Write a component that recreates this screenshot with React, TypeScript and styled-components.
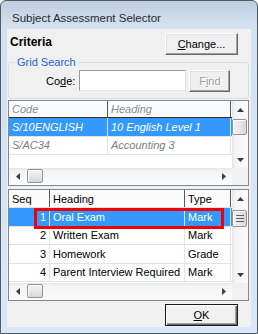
import styled, { createGlobalStyle, css } from "styled-components";

const GlobalStyle = createGlobalStyle`
  * { box-sizing: border-box; }
  html, body { margin: 0; padding: 0; background: #ffffff; }
  body {
    font-family: "Liberation Sans", Arial, sans-serif;
    font-size: 11px;
    color: #000;
  }
`;

const Window = styled.div`
  width: 258px;
  height: 334px;
  display: flex;
  flex-direction: column;
  padding: 0 6px 6px;
  border: 1px solid #525c66;
  border-radius: 6px 6px 0 0;
  background: linear-gradient(#bfcedf, #d3e1f0 26px, #d9e7f6);
`;

const TitleBar = styled.div`
  flex: none;
  height: 28px;
  padding: 10px 0 0 5px;
  font-size: 11.5px;
  line-height: 14px;
  color: #2a2a2a;
`;

const Client = styled.div`
  flex: 1;
  display: flex;
  flex-direction: column;
  padding: 4px 2px 0 1px;
  background: #f0f0f0;
`;

const TopRow = styled.div`
  flex: none;
  height: 22px;
  display: flex;
  justify-content: space-between;
`;

const SectionTitle = styled.div`
  padding: 2px 0 0 2px;
  font-size: 12px;
  font-weight: bold;
  line-height: 14px;
`;

const Button = styled.button<{ $width?: number; $primary?: boolean; $inactive?: boolean }>`
  flex: none;
  width: ${(p) => p.$width ?? 73}px;
  height: 22px;
  padding: 0;
  font: inherit;
  font-size: 11px;
  line-height: 1;
  color: #000;
  background: #f0f0f0;
  border: 1px solid;
  border-color: #ffffff #696969 #696969 #ffffff;
  box-shadow: inset -1px -1px #a0a0a0, inset 1px 1px #e3e3e3;

  ${(p) =>
    p.$primary &&
    css`
      border-color: #1a1a1a;
      box-shadow: inset 1px 1px #ffffff, inset -1px -1px #696969, inset -2px -2px #a0a0a0;
    `}

  ${(p) =>
    p.$inactive &&
    css`
      color: #a0a0a0;
      text-shadow: 1px 1px #ffffff;
    `}

  u { text-underline-offset: 1px; }
`;

const TopButton = styled(Button)`
  margin-right: 11px;
`;

const GroupBox = styled.fieldset`
  flex: none;
  width: 241px;
  height: 44px;
  margin: 0;
  padding: 0;
  min-inline-size: 0;
  border: 1px solid #d5dfe5;
  border-radius: 3px;
`;

const Legend = styled.legend`
  margin-left: 6px;
  padding: 0 2px;
  font-size: 11px;
  line-height: 14px;
  color: #1f5fd1;
`;

const FieldRow = styled.div`
  display: flex;
  align-items: flex-start;
  padding: 1px 0 0 37px;
`;

const FieldLabel = styled.label`
  height: 21px;
  display: flex;
  align-items: center;
  margin-right: 4px;
`;

const TextBox = styled.input`
  width: 107px;
  height: 21px;
  margin: 0 3px 0 0;
  padding: 0 2px;
  font: inherit;
  background: #ffffff;
  border: 1px solid;
  border-color: #9a9a9a #e3e3e3 #e3e3e3 #9a9a9a;
  outline: none;
`;

const GridFrame = styled.div<{ $height: number; $gap: number }>`
  position: relative;
  flex: none;
  width: 241px;
  height: ${(p) => p.$height}px;
  margin-top: ${(p) => p.$gap}px;
  display: grid;
  grid-template-columns: 1fr 16px;
  grid-template-rows: 1fr 17px;
  border: 1px solid #828790;
  background: #ffffff;
`;

const GridBody = styled.div`
  grid-column: 1;
  grid-row: 1;
  overflow: hidden;
`;

const HeaderRow = styled.div<{ $cols: string; $height: number; $line: string }>`
  display: grid;
  grid-template-columns: ${(p) => p.$cols};
  height: ${(p) => p.$height}px;
  border-bottom: 1px solid ${(p) => p.$line};
  background: #fbfbfb;
`;

const HeaderCell = styled.div<{ $dim?: boolean }>`
  display: flex;
  align-items: center;
  padding: 0 3px;
  border-right: 1px solid #5a5a5a;
  white-space: nowrap;
  overflow: hidden;
  color: ${(p) => (p.$dim ? "#8c8c8c" : "#000")};
  font-style: ${(p) => (p.$dim ? "italic" : "normal")};
`;

const Row = styled.div<{ $cols: string; $selected?: boolean; $dim?: boolean }>`
  display: grid;
  grid-template-columns: ${(p) => p.$cols};
  height: 18.5px;
  border-bottom: 1px solid #e2e2e2;
  background: ${(p) => (p.$selected ? "#3399ff" : "#ffffff")};
  color: ${(p) => (p.$selected ? "#ffffff" : p.$dim ? "#7d7d7d" : "#000")};
  font-style: ${(p) => (p.$dim ? "italic" : "normal")};
`;

const Cell = styled.div<{ $right?: boolean }>`
  display: flex;
  align-items: center;
  justify-content: ${(p) => (p.$right ? "flex-end" : "flex-start")};
  padding: 0 3px;
  border-right: 1px solid #e2e2e2;
  white-space: nowrap;
  overflow: hidden;
`;

const VScroll = styled.div`
  grid-column: 2;
  grid-row: 1;
  display: flex;
  flex-direction: column;
  background: linear-gradient(to right, #e6e6e6, #f4f4f4 3px, #fbfbfb);
`;

const HScroll = styled.div`
  grid-column: 1;
  grid-row: 2;
  display: flex;
  background: linear-gradient(#e6e6e6, #f4f4f4 3px, #fbfbfb);
`;

const ScrollCorner = styled.div`
  grid-column: 2;
  grid-row: 2;
  background: #f0f0f0;
`;

const ArrowCell = styled.div<{ $horizontal?: boolean }>`
  flex: none;
  width: ${(p) => (p.$horizontal ? 17 : 16)}px;
  height: ${(p) => (p.$horizontal ? 17 : 17)}px;
  display: flex;
  align-items: center;
  justify-content: center;
`;

const Spacer = styled.div`
  flex: 1;
`;

const Thumb = styled.div<{ $horizontal?: boolean; $offset: number; $size: number }>`
  flex: none;
  display: flex;
  align-items: center;
  justify-content: center;
  border: 1px solid #959595;
  border-radius: 2px;
  box-shadow: inset 1px 1px #ffffff;
  ${(p) =>
    p.$horizontal
      ? css`
          width: ${p.$size}px;
          height: 14px;
          margin: 1px 0 0 ${p.$offset}px;
          background: linear-gradient(#f3f3f3, #e8e8e8 50%, #d6d6d6);
        `
      : css`
          width: 15px;
          height: ${p.$size}px;
          margin: ${p.$offset}px 0 0 0;
          background: linear-gradient(to right, #f3f3f3, #e8e8e8 50%, #d6d6d6);
        `}
`;

const Highlight = styled.div`
  position: absolute;
  left: 25px;
  top: 18px;
  width: 190px;
  height: 21px;
  border: 3px solid #f00000;
  pointer-events: none;
`;

const BottomRow = styled.div`
  flex: none;
  display: flex;
  justify-content: flex-end;
  margin-top: 3px;
`;

type Dir = "up" | "down" | "left" | "right";

const arrowPoints: Record<Dir, string> = {
  up: "3.5,0 7,4 0,4",
  down: "0,0 7,0 3.5,4",
  left: "4,0 4,7 0,3.5",
  right: "0,0 4,3.5 0,7",
};

const Arrow = ({ dir }: { dir: Dir }) => {
  const flat = dir === "up" || dir === "down";
  return (
    <ArrowCell $horizontal={!flat}>
      <svg width={flat ? 7 : 4} height={flat ? 4 : 7} viewBox={flat ? "0 0 7 4" : "0 0 4 7"}>
        <polygon points={arrowPoints[dir]} fill="#3d3d3d" />
      </svg>
    </ArrowCell>
  );
};

const Grip = () => (
  <svg width="8" height="7" viewBox="0 0 8 7">
    <path d="M0 0.5h8M0 3.5h8M0 6.5h8" stroke="#606060" strokeWidth="1" />
  </svg>
);

const Scrollbars = ({ vOffset, vSize, grip }: { vOffset: number; vSize: number; grip?: boolean }) => (
  <>
    <VScroll>
      <Arrow dir="up" />
      <Thumb $offset={vOffset} $size={vSize}>{grip && <Grip />}</Thumb>
      <Spacer />
      <Arrow dir="down" />
    </VScroll>
    <HScroll>
      <Arrow dir="left" />
      <Thumb $horizontal $offset={1} $size={16} />
      <Spacer />
      <Arrow dir="right" />
    </HScroll>
    <ScrollCorner />
  </>
);

const subjects = [
  { code: "S/10ENGLISH", heading: "10 English Level 1" },
  { code: "S/AC34", heading: "Accounting 3" },
];

const assessments = [
  { seq: 1, heading: "Oral Exam", type: "Mark" },
  { seq: 2, heading: "Written Exam", type: "Mark" },
  { seq: 3, heading: "Homework", type: "Grade" },
  { seq: 4, heading: "Parent Interview Required", type: "Mark" },
];

const subjectCols = "99px 123px";
const assessmentCols = "41px 135px 46px";

const App = () => {
  return (
    <>
      <GlobalStyle />
      <Window>
        <TitleBar>Subject Assessment Selector</TitleBar>
        <Client>
          <TopRow>
            <SectionTitle>Criteria</SectionTitle>
            <TopButton>
              <u>C</u>hange...
            </TopButton>
          </TopRow>

          <GroupBox>
            <Legend>Grid Search</Legend>
            <FieldRow>
              <FieldLabel htmlFor="code">
                Co<u>d</u>e:
              </FieldLabel>
              <TextBox id="code" />
              <Button $width={41} $inactive>
                F<u>i</u>nd
              </Button>
            </FieldRow>
          </GroupBox>

          <GridFrame $height={86} $gap={1}>
            <GridBody>
              <HeaderRow $cols={subjectCols} $height={17} $line="#2e2e2e">
                <HeaderCell $dim>Code</HeaderCell>
                <HeaderCell $dim>Heading</HeaderCell>
              </HeaderRow>
              {subjects.map((s, i) => (
                <Row key={s.code} $cols={subjectCols} $selected={i === 0} $dim>
                  <Cell>{s.code}</Cell>
                  <Cell>{s.heading}</Cell>
                </Row>
              ))}
            </GridBody>
            <Scrollbars vOffset={1} vSize={16} />
          </GridFrame>

          <GridFrame $height={112} $gap={3}>
            <GridBody>
              <HeaderRow $cols={assessmentCols} $height={18} $line="#e2e2e2">
                <HeaderCell>Seq</HeaderCell>
                <HeaderCell>Heading</HeaderCell>
                <HeaderCell>Type</HeaderCell>
              </HeaderRow>
              {assessments.map((a, i) => (
                <Row key={a.seq} $cols={assessmentCols} $selected={i === 0}>
                  <Cell $right>{a.seq}</Cell>
                  <Cell>{a.heading}</Cell>
                  <Cell>{a.type}</Cell>
                </Row>
              ))}
            </GridBody>
            <Scrollbars vOffset={3} vSize={17} grip />
            <Highlight />
          </GridFrame>

          <BottomRow>
            <TopButton $primary>
              <u>O</u>K
            </TopButton>
          </BottomRow>
        </Client>
      </Window>
    </>
  );
};

export default App;
